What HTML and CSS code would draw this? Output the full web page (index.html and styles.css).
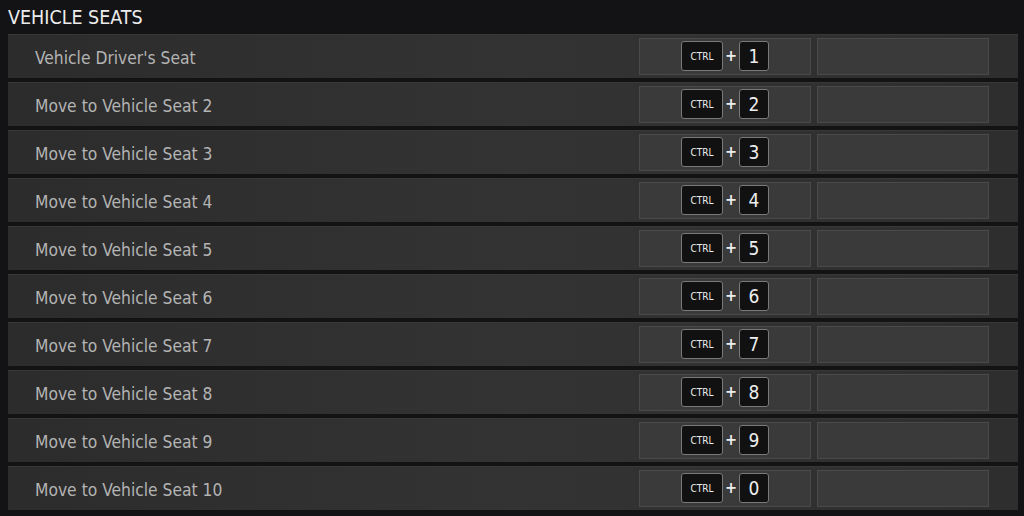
FILE: index.html
```html
<!DOCTYPE html>
<html lang="en">
<head>
  <meta charset="UTF-8">
  <title>Vehicle Seats</title>
  <link rel="stylesheet" href="styles.css">
</head>
<body>
  <h2 class="section-title">VEHICLE SEATS</h2>

  <div class="bind-list">
    <div class="bind-row">
      <span class="bind-name">Vehicle Driver's Seat</span>
      <div class="bind-slot"><span class="key key-mod">CTRL</span><span class="plus">+</span><span class="key">1</span></div>
      <div class="bind-slot"></div>
    </div>
    <div class="bind-row">
      <span class="bind-name">Move to Vehicle Seat 2</span>
      <div class="bind-slot"><span class="key key-mod">CTRL</span><span class="plus">+</span><span class="key">2</span></div>
      <div class="bind-slot"></div>
    </div>
    <div class="bind-row">
      <span class="bind-name">Move to Vehicle Seat 3</span>
      <div class="bind-slot"><span class="key key-mod">CTRL</span><span class="plus">+</span><span class="key">3</span></div>
      <div class="bind-slot"></div>
    </div>
    <div class="bind-row">
      <span class="bind-name">Move to Vehicle Seat 4</span>
      <div class="bind-slot"><span class="key key-mod">CTRL</span><span class="plus">+</span><span class="key">4</span></div>
      <div class="bind-slot"></div>
    </div>
    <div class="bind-row">
      <span class="bind-name">Move to Vehicle Seat 5</span>
      <div class="bind-slot"><span class="key key-mod">CTRL</span><span class="plus">+</span><span class="key">5</span></div>
      <div class="bind-slot"></div>
    </div>
    <div class="bind-row">
      <span class="bind-name">Move to Vehicle Seat 6</span>
      <div class="bind-slot"><span class="key key-mod">CTRL</span><span class="plus">+</span><span class="key">6</span></div>
      <div class="bind-slot"></div>
    </div>
    <div class="bind-row">
      <span class="bind-name">Move to Vehicle Seat 7</span>
      <div class="bind-slot"><span class="key key-mod">CTRL</span><span class="plus">+</span><span class="key">7</span></div>
      <div class="bind-slot"></div>
    </div>
    <div class="bind-row">
      <span class="bind-name">Move to Vehicle Seat 8</span>
      <div class="bind-slot"><span class="key key-mod">CTRL</span><span class="plus">+</span><span class="key">8</span></div>
      <div class="bind-slot"></div>
    </div>
    <div class="bind-row">
      <span class="bind-name">Move to Vehicle Seat 9</span>
      <div class="bind-slot"><span class="key key-mod">CTRL</span><span class="plus">+</span><span class="key">9</span></div>
      <div class="bind-slot"></div>
    </div>
    <div class="bind-row">
      <span class="bind-name">Move to Vehicle Seat 10</span>
      <div class="bind-slot"><span class="key key-mod">CTRL</span><span class="plus">+</span><span class="key">0</span></div>
      <div class="bind-slot"></div>
    </div>
  </div>
</body>
</html>
```

FILE: styles.css
```css
body {
  margin: 0;
  padding: 0 6px 0 8px;
  background-color: #131316;
  font-family: "DejaVu Sans Condensed", Roboto, sans-serif;
  color: #b4b4b4;
  height: 516px;
  overflow: hidden;
}

.section-title {
  margin: 0;
  height: 34px;
  line-height: 36px;
  font-size: 19.5px;
  font-weight: normal;
  color: #ececec;
}

.bind-list {
  display: flex;
  flex-direction: column;
  gap: 4px;
}

.bind-row {
  display: flex;
  align-items: center;
  height: 44px;
  background: linear-gradient(90deg, #2c2c2c, #333 50%, #2e2e2e);
  box-shadow: inset 0 1px 0 #383838;
}

.bind-name {
  flex: 1;
  padding: 3px 0 0 27px;
  font-size: 17.3px;
}

.bind-slot {
  display: flex;
  align-items: center;
  justify-content: center;
  width: 170px;
  height: 35px;
  margin-right: 6px;
  background-color: #3a3a3a;
  border: 1px solid #4a4a4a;
}

.bind-slot:last-child {
  margin-right: 29px;
}

.key {
  display: flex;
  align-items: center;
  justify-content: center;
  box-sizing: border-box;
  width: 30px;
  height: 30px;
  background-color: #111;
  border: 1px solid #7a7a7a;
  border-radius: 3px;
  color: #eee;
  font-size: 19px;
}

.key-mod {
  width: 42px;
  font-size: 10px;
}

.plus {
  width: 16px;
  text-align: center;
  color: #eee;
  font-size: 16px;
  font-weight: bold;
  line-height: 1;
}
```
